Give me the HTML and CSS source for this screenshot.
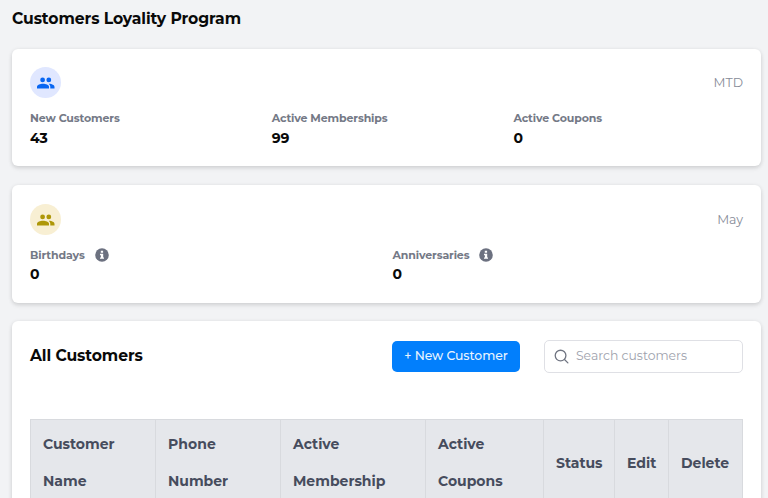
FILE: index.html
```html
<!DOCTYPE html>
<html lang="en">
<head>
<meta charset="utf-8">
<title>Customers Loyality Program</title>
<link rel="stylesheet" href="styles.css">
</head>
<body>
<svg width="0" height="0" class="defs" aria-hidden="true">
  <symbol id="people" viewBox="0 0 18 12"><circle cx="5.6" cy="2.9" r="2.4"/><circle cx="11.8" cy="2.9" r="2.4"/><path d="M0 11.6V9.9C0 7.8 3.3 6.8 6 6.8s6 1 6 3.1v1.7z"/><path d="M12.2 6.8c2.4.2 5.3 1.2 5.3 3.1v1.7h-4.2V9.9c0-1.3-.5-2.3-1.6-3z"/></symbol>
  <symbol id="info" viewBox="0 0 14 14"><circle cx="7" cy="7" r="6.8"/><path fill="#fff" d="M5.8 2.8h2.3v2H5.8zM5 5.8h3.2v3.6H9v1.4H5V9.4h.9V7.2H5z"/></symbol>
</svg>
<main class="page">
  <h1 class="page-title">Customers Loyality Program</h1>
  <section class="card stats">
    <div class="card-top"><span class="badge blue"><svg class="people"><use href="#people"/></svg></span><span class="period">MTD</span></div>
    <div class="grid three">
      <div><div class="label">New Customers</div><div class="value">43</div></div>
      <div><div class="label">Active Memberships</div><div class="value">99</div></div>
      <div><div class="label">Active Coupons</div><div class="value">0</div></div>
    </div>
  </section>
  <section class="card stats second">
    <div class="card-top"><span class="badge gold"><svg class="people"><use href="#people"/></svg></span><span class="period">May</span></div>
    <div class="grid two">
      <div><div class="label"><span>Birthdays</span><svg class="info"><use href="#info"/></svg></div><div class="value">0</div></div>
      <div><div class="label"><span>Anniversaries</span><svg class="info"><use href="#info"/></svg></div><div class="value">0</div></div>
    </div>
  </section>
  <section class="card customers">
    <div class="toolbar">
      <h2 class="section-title">All Customers</h2>
      <button class="new-btn">+ New Customer</button>
      <label class="search"><svg class="glass" viewBox="0 0 16 16"><circle cx="7" cy="7" r="5.7"/><path d="M11.2 11.2l3.6 3.6"/></svg><span>Search customers</span></label>
    </div>
    <table class="table">
      <colgroup><col class="c1"><col class="c2"><col class="c3"><col class="c4"><col class="c5"><col class="c6"><col class="c7"></colgroup>
      <thead><tr><th>Customer<br>Name</th><th>Phone<br>Number</th><th>Active<br>Membership</th><th>Active<br>Coupons</th><th>Status</th><th>Edit</th><th>Delete</th></tr></thead>
    </table>
  </section>
</main>
</body>
</html>
```
FILE: styles.css
```css
* { box-sizing: border-box; }
body { margin: 0; height: 498px; overflow: hidden; background: #f2f3f5; color: #090909; font-family: Montserrat, Inter, sans-serif; }
.defs { position: absolute; }
.page { height: 498px; overflow: hidden; padding: 8px 7px 0 12px; }
.page-title { margin: 0 0 20px; font-size: 15.6px; letter-spacing: -.08px; line-height: 21px; font-weight: 700; white-space: nowrap; }
.card { background: #fff; border-radius: 6px; padding: 18px 18px 0; box-shadow: 0 1px 4px rgba(0,0,0,.13), 0 3px 5px rgba(0,0,0,.05); }
.stats { height: 117px; margin-bottom: 19px; }
.second { height: 118px; margin-bottom: 18px; padding-top: 19px; }
.card-top { display: flex; justify-content: space-between; height: 31px; align-items: center; }
.badge { width: 31px; height: 31px; border-radius: 50%; display: grid; place-items: center; }
.blue { background: #e0e7ff; color: #0866f2; }
.gold { background: #f8efd3; color: #ae9708; }
.people { width: 18px; height: 12px; fill: currentColor; }
.period { font-size: 12.5px; line-height: 16px; color: #878b97; }
.grid { display: grid; margin-top: 12px; }
.three { grid-template-columns: 241.7px 241.7px 1fr; }
.two { grid-template-columns: 362.5px 1fr; }
.label { display: flex; align-items: center; gap: 9px; height: 16px; font-size: 11px; font-weight: 700; letter-spacing: -.12px; color: #747986; }
.second .label { height: 15px; gap: 10px; }
.info { width: 14px; height: 14px; fill: #6c7180; }
.value { font-size: 14px; font-weight: 700; line-height: 18px; margin-top: 3px; }
.customers { height: 230px; }
.toolbar { display: flex; align-items: center; height: 34px; }
.section-title { margin: 0 auto 1px 0; font-size: 15.6px; letter-spacing: -.08px; font-weight: 700; }
.new-btn { width: 128px; height: 31px; border: 0; border-radius: 5px; background: #027ffc; color: #e9f4ff; font: 500 12.4px Montserrat, Inter, sans-serif; letter-spacing: -.05px; padding: 0 0 1px; white-space: nowrap; }
.search { width: 199px; height: 33px; margin-left: 24px; border: 1px solid #dfe0e5; border-radius: 5px; display: flex; align-items: center; padding-left: 9px; gap: 7px; font-size: 12.4px; color: #9ea2ad; }
.search span { padding-bottom: 1px; }
.glass { width: 15px; height: 15px; fill: none; stroke: #707582; stroke-width: 1.4; stroke-linecap: round; }
.table { width: 713px; margin-top: 46px; table-layout: fixed; border-collapse: collapse; background: #e5e7eb; color: #464c5d; }
.table th { border: 1px solid #d8dade; padding: 6px 0 6px 12px; text-align: left; font-size: 14px; line-height: 37px; font-weight: 700; }
.c1 { width: 125px; } .c2 { width: 125px; } .c3 { width: 145px; } .c4 { width: 118px; } .c5 { width: 71px; } .c6 { width: 54px; } .c7 { width: 74px; }
```
